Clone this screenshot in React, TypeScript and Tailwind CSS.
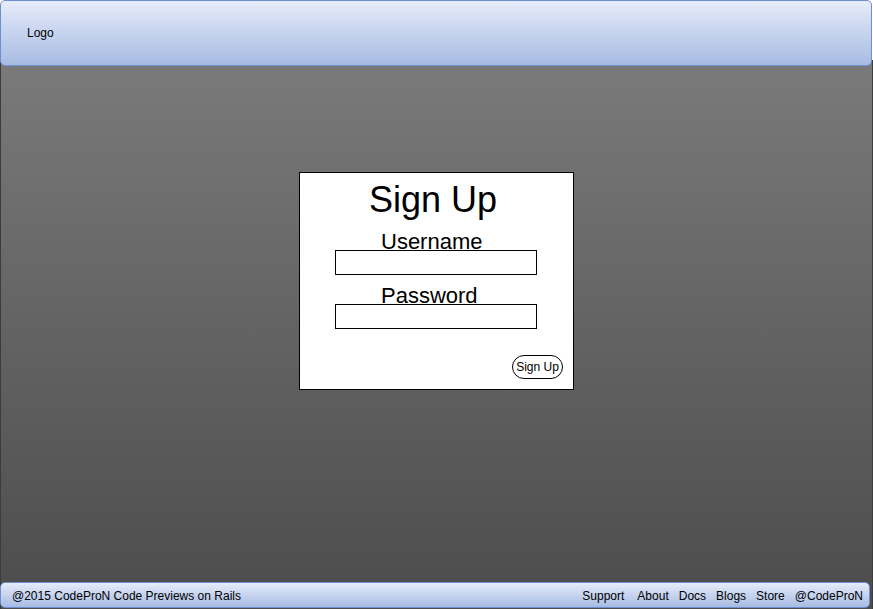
export default function App() {
  const links = ["Support", "About", "Docs", "Blogs", "Store", "@CodeProN"];

  return (
    <div className="w-[873px] h-[609px] bg-white flex flex-col font-['Liberation_Sans',Arial,sans-serif] text-black overflow-hidden">
      {/* Header */}
      <header className="relative z-10 h-[66px] w-[872px] shrink-0 rounded-[5px] border border-[#6e8fcf] bg-gradient-to-b from-[#e6ecf9] to-[#a7bbe3] flex items-center pl-[26px] text-[12px]">
        Logo
      </header>

      {/* Body */}
      <main className="-mt-[6px] flex-1 flex flex-col items-center bg-gradient-to-b from-[#7a7a7a] to-[#4c4c4c] border-x border-[#3c3c3c]">
        <div className="mt-[112px] w-[275px] h-[218px] bg-white border border-black flex flex-col">
          <h1 className="pt-[9px] pr-[7px] text-center text-[36px] leading-none">Sign Up</h1>

          <label className="mt-[16px] pl-[81px] text-[22px] leading-[16px]">Username</label>
          <input className="ml-[35px] w-[202px] h-[25px] border border-black outline-none" />

          <label className="mt-[13px] pl-[81px] text-[22px] leading-[16px]">Password</label>
          <input
            type="password"
            className="ml-[35px] w-[202px] h-[25px] border border-black outline-none"
          />

          <div className="mt-[26px] flex justify-end pr-[10px]">
            <button className="h-[24px] w-[51px] rounded-full border border-black bg-white text-[12px] leading-none">
              Sign Up
            </button>
          </div>
        </div>

        {/* Footer */}
        <footer className="mt-auto mb-[1px] w-[870px] self-start -ml-[1px] h-[26px] rounded-[5px] border border-[#6e8fcf] bg-gradient-to-b from-[#e6ecf9] to-[#a7bbe3] flex items-center justify-between pl-[11px] pr-[6px] pt-[2px] text-[12px]">
          <span>@2015 CodeProN Code Previews on Rails</span>
          <nav className="flex items-center gap-[10px]">
            {links.map((l, i) => (
              <a key={l} className={i === 0 ? "mr-[3px]" : ""}>
                {l}
              </a>
            ))}
          </nav>
        </footer>
      </main>
    </div>
  );
}
